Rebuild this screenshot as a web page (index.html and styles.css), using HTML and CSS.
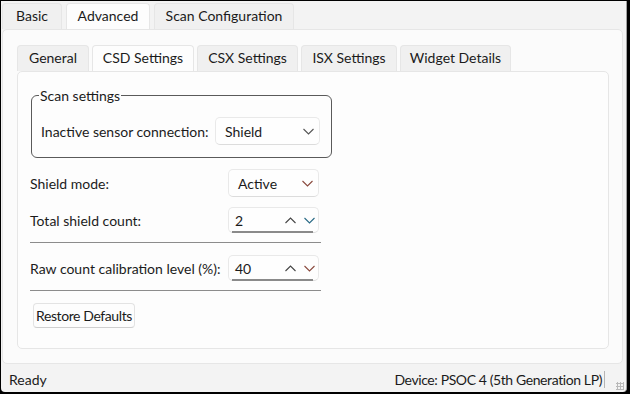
FILE: index.html
```html
<!DOCTYPE html>
<html lang="en">
<head>
  <meta charset="UTF-8">
  <title>CSD Settings</title>
  <link rel="stylesheet" href="styles.css">
</head>
<body>
  <div class="window">
    <div class="tabs outer-tabs">
      <div class="tab">Basic</div>
      <div class="tab active">Advanced</div>
      <div class="tab">Scan Configuration</div>
    </div>

    <div class="pane outer-pane">
      <div class="tabs inner-tabs">
        <div class="tab">General</div>
        <div class="tab active">CSD Settings</div>
        <div class="tab">CSX Settings</div>
        <div class="tab">ISX Settings</div>
        <div class="tab">Widget Details</div>
      </div>

      <div class="pane inner-pane">
        <fieldset class="group">
          <legend>Scan settings</legend>
          <div class="row">
            <span class="label">Inactive sensor connection:</span>
            <div class="combo wide">
              <span>Shield</span>
              <svg class="chev" width="11" height="7" viewBox="0 0 11 7"><path d="M0.5 1 L5.5 6 L10.5 1" fill="none" stroke="#555" stroke-width="1.1"/></svg>
            </div>
          </div>
        </fieldset>

        <div class="form">
          <div class="row">
            <span class="label">Shield mode:</span>
            <div class="combo">
              <span>Active</span>
              <svg class="chev" width="11" height="7" viewBox="0 0 11 7"><path d="M0.5 1 L5.5 6 L10.5 1" fill="none" stroke="#8a4a3e" stroke-width="1.1"/></svg>
            </div>
          </div>

          <div class="row ruled">
            <span class="label">Total shield count:</span>
            <div class="combo spin">
              <span>2</span>
              <span class="arrows">
                <svg width="11" height="7" viewBox="0 0 11 7"><path d="M0.5 6 L5.5 1 L10.5 6" fill="none" stroke="#444" stroke-width="1.1"/></svg>
                <svg width="11" height="7" viewBox="0 0 11 7"><path d="M0.5 1 L5.5 6 L10.5 1" fill="none" stroke="#2a6a86" stroke-width="1.1"/></svg>
              </span>
            </div>
          </div>

          <div class="row ruled">
            <span class="label">Raw count calibration level (%):</span>
            <div class="combo spin">
              <span>40</span>
              <span class="arrows">
                <svg width="11" height="7" viewBox="0 0 11 7"><path d="M0.5 6 L5.5 1 L10.5 6" fill="none" stroke="#444" stroke-width="1.1"/></svg>
                <svg width="11" height="7" viewBox="0 0 11 7"><path d="M0.5 1 L5.5 6 L10.5 1" fill="none" stroke="#8a4a3e" stroke-width="1.1"/></svg>
              </span>
            </div>
          </div>

          <button class="btn">Restore Defaults</button>
        </div>
      </div>
    </div>

    <div class="status">
      <span>Ready</span>
      <span class="device">Device: PSOC 4 (5th Generation LP)</span>
      <span class="grip"></span>
    </div>
  </div>
</body>
</html>
```

FILE: styles.css
```css
body {
  margin: 0;
  width: 630px;
  height: 394px;
  overflow: hidden;
  background: #000;
  font-family: "Lato", "Liberation Sans", sans-serif;
  font-size: 14px;
  color: #1b1b1b;
}
.window {
  box-sizing: border-box;
  height: 391px;
  margin: 1px 3px 0 1px;
  background: #f3f3f3;
  border-right: 1px solid #a0a0a0;
  border-radius: 0 0 4px 4px;
  display: flex;
  flex-direction: column;
}
.tabs {
  display: flex;
  gap: 4px;
}
.tab {
  box-sizing: border-box;
  height: 26px;
  line-height: 24px;
  text-align: center;
  background: #f0f0f0;
  border: 1px solid #e6e6e6;
  border-bottom: none;
  border-radius: 4px 4px 0 0;
}
.tab.active {
  background: #fdfdfd;
}
.outer-tabs {
  margin: 2px 0 0 1px;
}
.outer-tabs .tab:nth-child(1) { width: 60px; }
.outer-tabs .tab:nth-child(2) { width: 84px; }
.outer-tabs .tab:nth-child(3) { width: 140px; }
.inner-tabs .tab:nth-child(1) { width: 72px; }
.inner-tabs .tab:nth-child(2) { width: 102px; }
.inner-tabs .tab:nth-child(3) { width: 101px; }
.inner-tabs .tab:nth-child(4) { width: 96px; }
.inner-tabs .tab:nth-child(5) { width: 111px; }
.inner-tabs {
  gap: 3px;
}
.pane {
  background: #fbfbfb;
  border: 1px solid #e6e6e6;
  border-radius: 5px;
}
.outer-pane {
  height: 335px;
  box-sizing: border-box;
  margin: 0 3px 0 1px;
  padding: 15px 13px 0 14px;
}
.inner-pane {
  box-sizing: border-box;
  height: 278px;
  background: #fdfdfd;
  padding: 15px 0 0 12px;
}
.group {
  box-sizing: border-box;
  width: 301px;
  height: 71px;
  margin: 0 0 0 1px;
  padding: 13px 11px 0 9px;
  border: 1px solid #5a5a5a;
  border-radius: 6px;
}
.group legend {
  padding: 0 1px;
  margin-left: -2px;
}
.row {
  display: flex;
  align-items: center;
  justify-content: space-between;
}
.combo {
  box-sizing: border-box;
  display: flex;
  align-items: center;
  justify-content: space-between;
  width: 91px;
  height: 28px;
  padding: 0 5px 0 9px;
  background: #fefefe;
  border: 1px solid #e9e9e9;
  border-bottom-color: #dcdcdc;
  border-radius: 5px;
}
.combo.wide {
  width: 105px;
}
.form {
  width: 291px;
  padding-top: 11px;
}
.form .row {
  height: 28px;
  padding-right: 2px;
  margin-bottom: 10px;
}
.form .row.ruled {
  height: 26px;
  padding-bottom: 9px;
  border-bottom: 1px solid #8c8c8c;
  margin-bottom: 12px;
}
.spin {
  position: relative;
  height: 26px;
  padding: 0 3px 0 6px;
}
.spin::after {
  content: "";
  position: absolute;
  left: 3px;
  right: 5px;
  bottom: -1px;
  border-bottom: 2px solid #8a8a8a;
}
.arrows {
  display: flex;
  gap: 8px;
}
.btn {
  font: inherit;
  letter-spacing: -0.4px;
  color: #1b1b1b;
  margin: 0 0 0 3px;
  height: 25px;
  padding: 0 2px;
  background: #fdfdfd;
  border: 1px solid #e3e3e3;
  border-bottom-color: #cfcfcf;
  border-radius: 4px;
}
.status {
  position: relative;
  flex: 1;
  display: flex;
  justify-content: space-between;
  align-items: center;
  padding: 3px 21px 0 8px;
}
.device {
  letter-spacing: -0.4px;
  padding-right: 2px;
  border-right: 1px solid #b5b5b5;
}
.grip {
  position: absolute;
  right: 2px;
  bottom: 2px;
  width: 8px;
  height: 8px;
  background: radial-gradient(circle, #b8b8b8 1px, transparent 1.2px) 0 0 / 3px 3px;
}
```
